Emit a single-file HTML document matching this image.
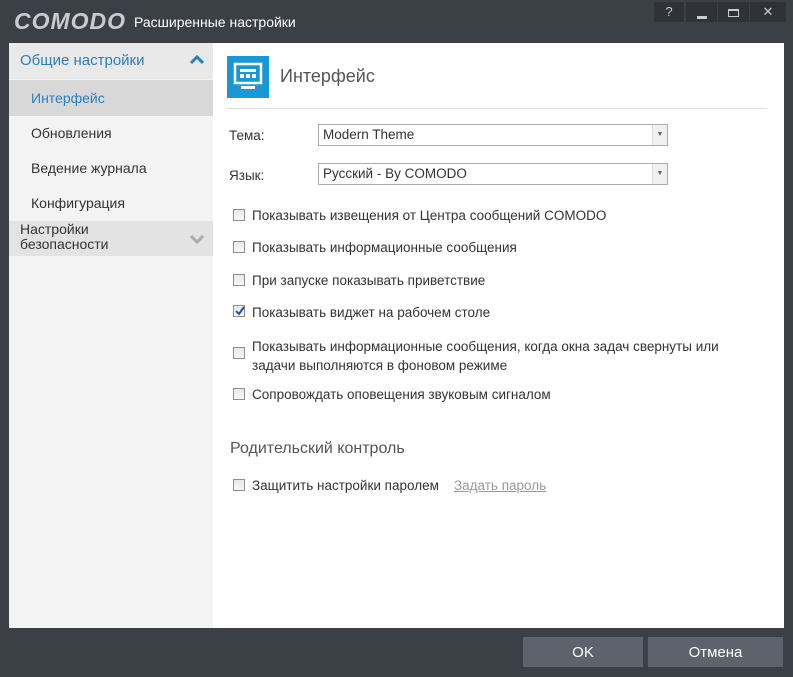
<!DOCTYPE html><html><head><meta charset="utf-8"><style>
*{margin:0;padding:0;box-sizing:border-box}
body{width:793px;height:677px;background:#3b3f46;font-family:"Liberation Sans","DejaVu Sans",sans-serif;position:relative;overflow:hidden;color:#333}
.a{position:absolute}
.logo{left:14px;top:8px;font-size:23px;font-weight:bold;font-style:italic;color:#c9cbce;letter-spacing:1px}
.title{left:134px;top:14px;font-size:14px;color:#fff}
.wb{top:2px;height:20px;background:#2f3238;color:#c9cbce;font-size:13px;text-align:center;line-height:20px}
.panel{left:9px;top:43px;width:775px;height:585px;background:#fff}
.side{left:9px;top:43px;width:204px;height:585px;background:#f3f3f3}
.si{position:absolute;left:22px;font-size:14px;color:#333}
.cb{position:absolute;width:12px;height:12px;border:1px solid #8f8f8f;background:linear-gradient(#e8e8e8,#f8f8f8)}
.t{position:absolute;font-size:13.5px;color:#333;white-space:nowrap}
.sel{position:absolute;left:318px;width:350px;height:22px;border:1px solid #adadad;background:#fff;font-size:13.5px;padding:2px 4px}
.sel b{position:absolute;right:0;top:0;width:15px;height:20px;background:#f0f0f0;border-left:1px solid #ddd;font-weight:normal;font-size:7px;color:#666;text-align:center;line-height:20px}
.btn{top:637px;height:30px;background:#5d626c;color:#fff;font-size:15px;text-align:center;line-height:32px}
</style></head><body>
<div class="a logo">COMODO</div>
<div class="a title">Расширенные настройки</div>
<div class="a wb" style="left:654px;width:30px">?</div>
<div class="a wb" style="left:686px;width:31px"><span style="display:inline-block;width:10px;height:3px;background:#c9cbce;vertical-align:-3px"></span></div>
<div class="a wb" style="left:718px;width:31px"><span style="display:inline-block;width:11px;height:8px;border:1px solid #c9cbce;border-top-width:2px;vertical-align:middle"></span></div>
<div class="a wb" style="left:750px;width:36px">✕</div>
<div class="a panel"></div>
<div class="a side">
 <div class="a" style="left:0;top:0;width:204px;height:36px;background:#e9e9e9"></div>
 <div class="si" style="left:11px;top:9px;color:#2a7fc1;font-size:15px">Общие настройки</div>
 <svg class="a" style="left:180px;top:12px" width="16" height="10"><path d="M2 8 L8 2 L14 8" stroke="#2a7fc1" stroke-width="3" fill="none"/></svg>
 <div class="a" style="left:0;top:37px;width:204px;height:36px;background:#d8d8d8"></div>
 <div class="si" style="top:47px;color:#2a7fc1">Интерфейс</div>
 <div class="si" style="top:82px">Обновления</div>
 <div class="si" style="top:117px">Ведение журнала</div>
 <div class="si" style="top:152px">Конфигурация</div>
 <div class="a" style="left:0;top:178px;width:204px;height:35px;background:#e3e3e3"></div>
 <div class="si" style="left:11px;top:179px;line-height:15px">Настройки<br>безопасности</div>
 <svg class="a" style="left:180px;top:191px" width="16" height="10"><path d="M2 2 L8 8 L14 2" stroke="#aaa" stroke-width="3" fill="none"/></svg>
</div>
<div class="a" style="left:227px;top:56px;width:42px;height:42px;background:#1a98d5"></div>
<svg class="a" style="left:232px;top:61px" width="32" height="32"><rect x="3" y="3" width="26" height="19" fill="none" stroke="#fff" stroke-width="2.5"/><rect x="8" y="8" width="16" height="3" fill="#fff"/><rect x="8" y="13" width="4" height="4" fill="#fff"/><rect x="14" y="13" width="4" height="4" fill="#fff"/><rect x="20" y="13" width="4" height="4" fill="#fff"/><rect x="9" y="25" width="14" height="3" fill="#fff"/></svg>
<div class="t" style="left:280px;top:66px;font-size:18px;color:#555">Интерфейс</div>
<div class="a" style="left:227px;top:108px;width:540px;height:1px;background:#ddd"></div>
<div class="t" style="left:229px;top:128px">Тема:</div>
<div class="sel" style="top:124px">Modern Theme<b>▼</b></div>
<div class="t" style="left:229px;top:168px">Язык:</div>
<div class="sel" style="top:163px">Русский - By COMODO<b>▼</b></div>
<div class="cb" style="left:233px;top:209px"></div><div class="t" style="left:252px;top:208px">Показывать извещения от Центра сообщений COMODO</div>
<div class="cb" style="left:233px;top:241px"></div><div class="t" style="left:252px;top:240px">Показывать информационные сообщения</div>
<div class="cb" style="left:233px;top:274px"></div><div class="t" style="left:252px;top:273px">При запуске показывать приветствие</div>
<div class="cb" style="left:233px;top:305px"></div><svg class="a" style="left:234px;top:305px" width="12" height="12"><path d="M2 6 L5 9 L10 2" stroke="#2a4fa8" stroke-width="2" fill="none"/></svg><div class="t" style="left:252px;top:305px">Показывать виджет на рабочем столе</div>
<div class="cb" style="left:233px;top:347px"></div><div class="t" style="left:252px;top:337px;line-height:19px">Показывать информационные сообщения, когда окна задач свернуты или<br>задачи выполняются в фоновом режиме</div>
<div class="cb" style="left:233px;top:388px"></div><div class="t" style="left:252px;top:387px">Сопровождать оповещения звуковым сигналом</div>
<div class="t" style="left:230px;top:440px;font-size:16px;color:#555">Родительский контроль</div>
<div class="cb" style="left:233px;top:479px"></div><div class="t" style="left:252px;top:478px">Защитить настройки паролем</div>
<div class="t" style="left:454px;top:478px;color:#999;text-decoration:underline">Задать пароль</div>
<div class="a btn" style="left:523px;width:120px">OK</div>
<div class="a btn" style="left:648px;width:135px">Отмена</div>
</body></html>
